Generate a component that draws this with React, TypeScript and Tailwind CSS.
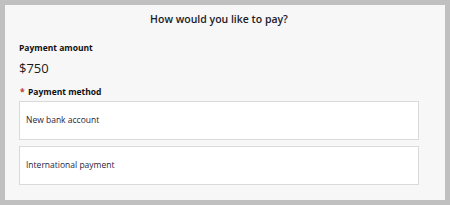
export default function App() {
  const methods = ["New bank account", "International payment"];

  return (
    <div
      className="w-[450px] h-[205px] bg-[#c0c0c0] p-[5px]"
      style={{ fontFamily: '"Open Sans", "Noto Sans", sans-serif' }}
    >
      <div className="h-full bg-[#f7f7f7] pl-[14px] pr-[26px] pt-[7px] flex flex-col">
        {/* Header */}
        <h1 className="text-center text-[10.5px] leading-[14px] font-semibold text-[#1b1b2b]">
          How would you like to pay?
        </h1>

        {/* Amount */}
        <div className="mt-[16px] text-[8.5px] leading-[12px] font-bold text-[#111]">
          Payment amount
        </div>
        <div className="mt-[5px] text-[13px] leading-[18px] text-[#1b1b1b]">$750</div>

        {/* Method */}
        <div className="mt-[9px] flex items-center text-[8.5px] leading-[12px] font-bold text-[#111]">
          <span className="text-[#c0392b] w-[9px] pl-[1px]">*</span>
          <span>Payment method</span>
        </div>

        <div className="mt-[3px] flex flex-col gap-[6px]">
          {methods.map((m) => (
            <div
              key={m}
              className="h-[39px] bg-white border border-[#dadada] flex items-center pl-[6px] text-[8.5px] text-[#2a2440]"
            >
              {m}
            </div>
          ))}
        </div>
      </div>
    </div>
  );
}
